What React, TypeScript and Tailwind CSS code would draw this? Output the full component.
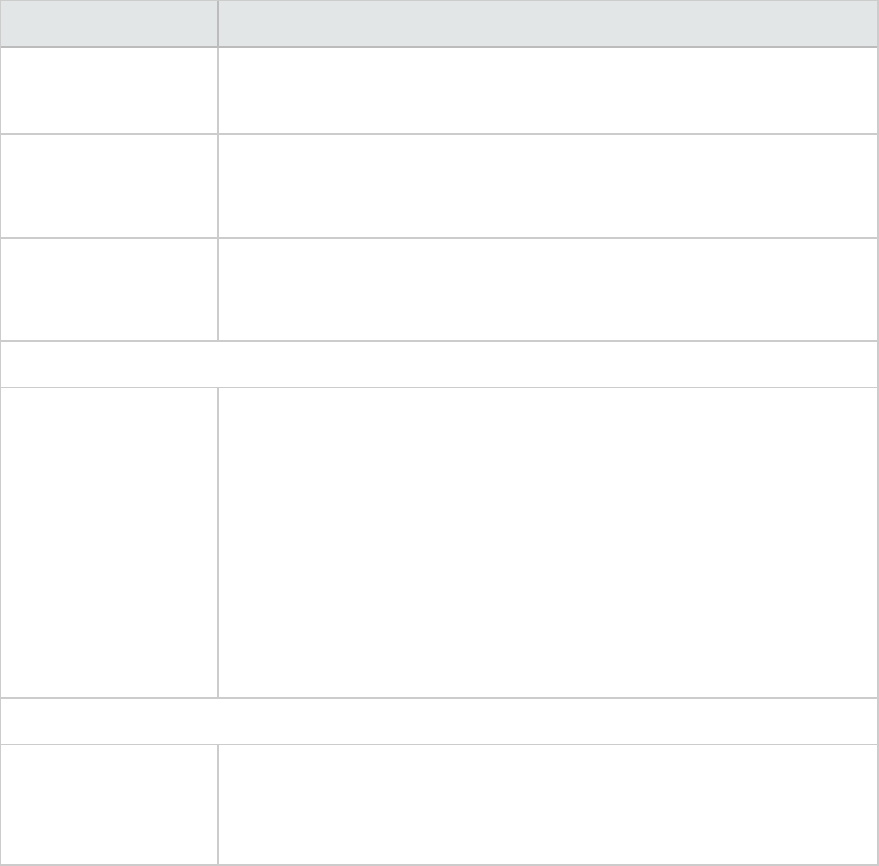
type Row = { kind: "pair" | "full"; height: string; border: string };

const rows: Row[] = [
  { kind: "pair", height: "h-[85px]", border: "border-b-2" },
  { kind: "pair", height: "h-[102px]", border: "border-b-2" },
  { kind: "pair", height: "h-[101px]", border: "border-b-2" },
  { kind: "full", height: "h-[45px]", border: "border-b" },
  { kind: "pair", height: "h-[309px]", border: "border-b-2" },
  { kind: "full", height: "h-[45px]", border: "border-b" },
  { kind: "pair", height: "h-[119px]", border: "" },
];

export default function App() {
  return (
    <div className="w-[879px] bg-white font-['Liberation_Sans',Arial,sans-serif] text-sm text-gray-800">
      <div className="flex flex-col border-t border-l border-r-2 border-b-2 border-[#cccccc]">
        {/* header */}
        <div className="flex h-[47px] border-b-2 border-[#bcbcbc] bg-[#e3e6e7]">
          <div className="w-[218px] shrink-0 border-r-2 border-[#bcbcbc]" />
          <div className="flex-1" />
        </div>

        {rows.map((row, i) =>
          row.kind === "full" ? (
            <div key={i} className={`${row.height} ${row.border} border-[#cccccc] box-content`} />
          ) : (
            <div key={i} className={`flex ${row.height} ${row.border} border-[#cccccc] box-content`}>
              <div className="w-[218px] shrink-0 border-r-2 border-[#cccccc]" />
              <div className="flex-1" />
            </div>
          )
        )}
      </div>
    </div>
  );
}
